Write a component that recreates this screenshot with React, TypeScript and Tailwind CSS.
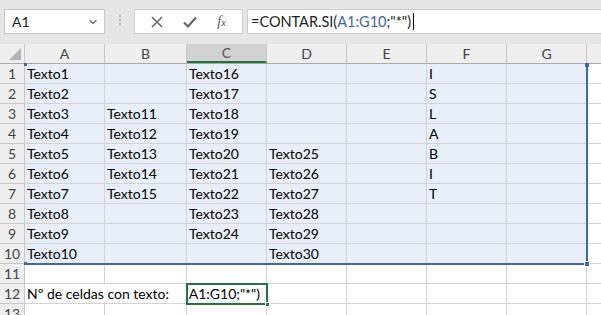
import { ChevronDown } from "lucide-react";

const cols = ["A", "B", "C", "D", "E", "F", "G", "H"];

// data for A1:G10 (empty string = blank cell)
const data: string[][] = [
  ["Texto1", "", "Texto16", "", "", "I", ""],
  ["Texto2", "", "Texto17", "", "", "S", ""],
  ["Texto3", "Texto11", "Texto18", "", "", "L", ""],
  ["Texto4", "Texto12", "Texto19", "", "", "A", ""],
  ["Texto5", "Texto13", "Texto20", "Texto25", "", "B", ""],
  ["Texto6", "Texto14", "Texto21", "Texto26", "", "I", ""],
  ["Texto7", "Texto15", "Texto22", "Texto27", "", "T", ""],
  ["Texto8", "", "Texto23", "Texto28", "", "", ""],
  ["Texto9", "", "Texto24", "Texto29", "", "", ""],
  ["Texto10", "", "", "Texto30", "", "", ""],
];

const font = "font-['Lato','Liberation_Sans',sans-serif]";

function Toolbar() {
  return (
    <div className="flex h-[44px] items-start bg-[#e6e6e6] pt-[9px]">
      <div className="ml-[4px] flex h-[25px] w-[101px] items-center justify-between border border-[#c6c6c6] bg-white pl-[7px] pr-[5px]">
        <span className={`${font} text-[14px] text-[#222]`}>A1</span>
        <ChevronDown className="h-3 w-3 text-[#777]" strokeWidth={3} />
      </div>
      <div className="ml-[14px] mt-[6px] flex flex-col gap-[2px]">
        <span className="h-[2px] w-[2px] bg-[#b5b5b5]" />
        <span className="h-[2px] w-[2px] bg-[#b5b5b5]" />
        <span className="h-[2px] w-[2px] bg-[#b5b5b5]" />
      </div>
      <div className="ml-[13px] flex h-[25px] w-[109px] items-center justify-around border border-[#d0d0d0] bg-white px-[6px]">
        <svg width="12" height="12" viewBox="0 0 12 12">
          <path d="M1 1 L11 11 M11 1 L1 11" stroke="#6b6b6b" strokeWidth="1.6" />
        </svg>
        <svg width="14" height="12" viewBox="0 0 14 12">
          <path d="M1 6.5 L5 10.5 L13 1.5" stroke="#6b6b6b" strokeWidth="2.2" fill="none" />
        </svg>
        <span className="font-['Liberation_Serif',serif] text-[14px] italic text-[#555]">
          f<span className="text-[11px]">x</span>
        </span>
      </div>
      <div className="ml-[4px] flex h-[25px] flex-1 items-center border border-r-0 border-[#d0d0d0] bg-white pl-[3px]">
        <span className={`${font} text-[14.5px] text-[#222]`}>
          =CONTAR.SI(<span className="text-[#3a66a8]">A1:G10</span>;"*")
        </span>
        <span className="ml-[2px] h-[17px] w-px bg-black" />
      </div>
    </div>
  );
}

function HeaderRow() {
  return (
    <div className="flex h-[20px] border-b border-[#ababab] bg-[#efefef]">
      <div className="relative w-[25px] shrink-0 border-r border-[#c8c8c8]">
        <svg className="absolute bottom-[3px] right-[3px]" width="12" height="12" viewBox="0 0 12 12">
          <path d="M12 0 L12 12 L0 12 Z" fill="#b4b4b4" />
        </svg>
      </div>
      {cols.map((c) => (
        <div
          key={c}
          className={`${font} flex shrink-0 items-center justify-center border-r border-[#c8c8c8] text-[14px] ${
            c === "B" ? "w-[82px]" : "w-[80px]"
          } ${c === "C" ? "border-b-2 border-b-[#217346] bg-[#d2d2d2] text-[#555]" : "text-[#444]"}`}
        >
          {c}
        </div>
      ))}
    </div>
  );
}

function Row({ n, cells, sel }: { n: number; cells: string[]; sel: boolean }) {
  return (
    <div className="flex h-[20px]">
      <div className={`${font} flex w-[25px] shrink-0 items-center justify-center border-r border-b border-[#c8c8c8] bg-[#efefef] text-[14px] text-[#444]`}>
        {n}
      </div>
      {cols.map((c, i) => (
        <div
          key={c}
          className={`${font} flex shrink-0 items-center whitespace-nowrap border-r border-b border-[#d4d4d4] pl-[2px] text-[14px] text-black ${
            c === "B" ? "w-[82px]" : "w-[80px]"
          } ${sel && i < 7 ? "bg-[#e9eff8]" : "bg-white"}`}
        >
          {cells[i] ?? ""}
        </div>
      ))}
    </div>
  );
}

export default function App() {
  return (
    <div className="h-[315px] w-[601px] overflow-hidden bg-white">
      <Toolbar />
      <HeaderRow />
      <div className="relative">
        {data.map((r, i) => (
          <Row key={i} n={i + 1} cells={r} sel />
        ))}
        <Row n={11} cells={[]} sel={false} />
        <div className="flex h-[20px]">
          <div className={`${font} flex w-[25px] shrink-0 items-center justify-center border-r border-b border-[#c8c8c8] bg-[#efefef] text-[14px] text-[#444]`}>
            12
          </div>
          <div className={`${font} flex w-[162px] shrink-0 items-center whitespace-nowrap border-b border-[#d4d4d4] pl-[2px] text-[14px]`}>
            Nº de celdas con texto:
          </div>
          <div className={`${font} flex w-[80px] shrink-0 items-center justify-end overflow-hidden whitespace-nowrap border-r border-b border-[#d4d4d4] pr-[6px] text-[14px]`}>
            =CONTAR.SI(A1:G10;"*")
          </div>
          {cols.slice(3).map((c) => (
            <div key={c} className="w-[80px] shrink-0 border-r border-b border-[#d4d4d4]" />
          ))}
        </div>
        <Row n={13} cells={[]} sel={false} />

        {/* range highlight A1:G10 */}
        <div className="pointer-events-none absolute left-[25px] top-0 h-[201px] w-[563px] border-r-2 border-b-2 border-[#3d6aa3]">
          <span className="absolute -left-px -top-px h-[3px] w-[3px] bg-[#3d6aa3]" />
          <span className="absolute -bottom-[2px] -left-px h-[3px] w-[3px] bg-[#3d6aa3]" />
          <span className="absolute -top-px -right-[3px] h-[4px] w-[4px] bg-[#3d6aa3]" />
          <span className="absolute -bottom-[4px] -right-[4px] h-[6px] w-[6px] border border-white bg-[#3d6aa3]" />
        </div>
        {/* active cell C12 */}
        <div className="pointer-events-none absolute left-[186px] top-[219px] h-[22px] w-[82px] border-2 border-[#217346]">
          <span className="absolute -bottom-[4px] -right-[4px] h-[5px] w-[5px] border border-white bg-[#217346]" />
        </div>
      </div>
    </div>
  );
}
